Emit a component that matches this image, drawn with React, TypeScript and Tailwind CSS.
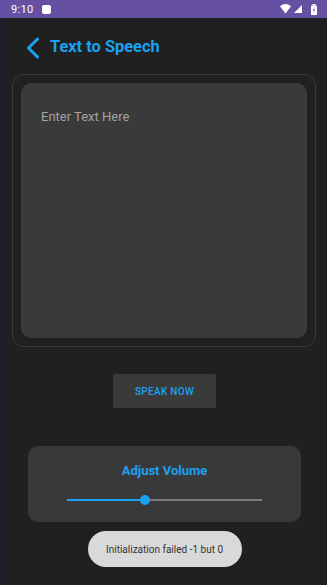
import React from "react";

// Status bar glyphs
const StatusIcons = () => (
  <div className="flex items-center gap-[3px] pr-[9px]">
    <svg width="11" height="10" viewBox="0 0 11 10">
      <path d="M0 2.2 Q5.5 -2 11 2.2 L5.5 9.5 Z" fill="white" />
    </svg>
    <svg width="8" height="8" viewBox="0 0 8 8">
      <path d="M8 0 L8 8 L0 8 Z" fill="white" />
    </svg>
    <svg width="8" height="11" viewBox="0 0 8 11" className="ml-[5px]">
      <rect x="2.5" y="0" width="3" height="1.5" fill="white" />
      <rect x="1" y="1.5" width="6" height="9.5" rx="0.6" fill="white" />
      <path d="M4.4 3 L2.8 6.4 H4 L3.6 8.8 L5.2 5.4 H4 Z" fill="#6650a4" />
    </svg>
  </div>
);

export default function App() {
  const volume = 40;

  return (
    <div
      className="w-[327px] h-[585px] bg-[#202020] flex flex-col shadow-[inset_1px_0_0_#1c1c33] overflow-hidden"
      style={{ fontFamily: "Roboto, 'Liberation Sans', sans-serif" }}
    >
      {/* Status bar */}
      <div className="h-[18px] bg-[#6650a4] flex items-center justify-between shrink-0">
        <div className="flex items-center pl-[11px] gap-[9px]">
          <span className="text-white text-[11px] leading-none tracking-[0.3px]">9:10</span>
          <div className="w-[9px] h-[9px] bg-white rounded-[2px]" />
        </div>
        <StatusIcons />
      </div>

      {/* Header */}
      <div className="h-[56px] pt-[3px] flex items-center pl-[25px] gap-[9px] shrink-0">
        <svg width="16" height="22" viewBox="0 0 16 22" fill="none">
          <path d="M12.5 2 L3.5 11 L12.5 20" stroke="#1ba1f2" strokeWidth="3" strokeLinecap="round" strokeLinejoin="round" />
        </svg>
        <h1 className="text-[16.4px] font-bold text-[#1ba1f2] leading-none">Text to Speech</h1>
      </div>

      {/* Text input card */}
      <div className="ml-[12px] w-[304px] h-[273px] border border-[#393939] rounded-[12px] p-[8px] shrink-0">
        <div className="h-full bg-[#3a3a3a] rounded-[10px] px-[20px] pt-[24px]">
          <p className="text-[13px] text-[#a3a3a3] leading-[20px]">Enter Text Here</p>
        </div>
      </div>

      {/* Speak button */}
      <div className="flex justify-center mt-[27px] pl-[2px]">
        <button className="w-[103px] h-[34px] bg-[#3a3a3a] rounded-[2px] text-[10px] font-medium text-[#1ba1f2] tracking-[0.3px]">
          SPEAK NOW
        </button>
      </div>

      {/* Volume card */}
      <div className="flex justify-center mt-[38px] pl-[2px]">
        <div className="w-[273px] h-[76px] bg-[#393939] rounded-[10px] flex flex-col items-center pt-[17px]">
          <h2 className="text-[13px] font-bold text-[#1ba1f2] leading-[16px]">Adjust Volume</h2>
          <div className="relative w-[195px] h-[10px] mt-[16px]">
            <div className="absolute left-0 right-0 top-[4px] h-[2px] bg-[#7b7b7b]" />
            <div className="absolute left-0 top-[4px] h-[2px] bg-[#1ba1f2]" style={{ width: `${volume}%` }} />
            <div
              className="absolute top-0 w-[10px] h-[10px] rounded-full bg-[#1ba1f2] -translate-x-1/2"
              style={{ left: `${volume}%` }}
            />
          </div>
        </div>
      </div>

      {/* Toast */}
      <div className="flex justify-center mt-[9px] pl-[2px]">
        <div className="w-[154px] h-[36px] bg-[#d9d9d9] rounded-full flex items-center justify-center">
          <span className="text-[10px] text-[#333333]">Initialization failed -1 but 0</span>
        </div>
      </div>
    </div>
  );
}
